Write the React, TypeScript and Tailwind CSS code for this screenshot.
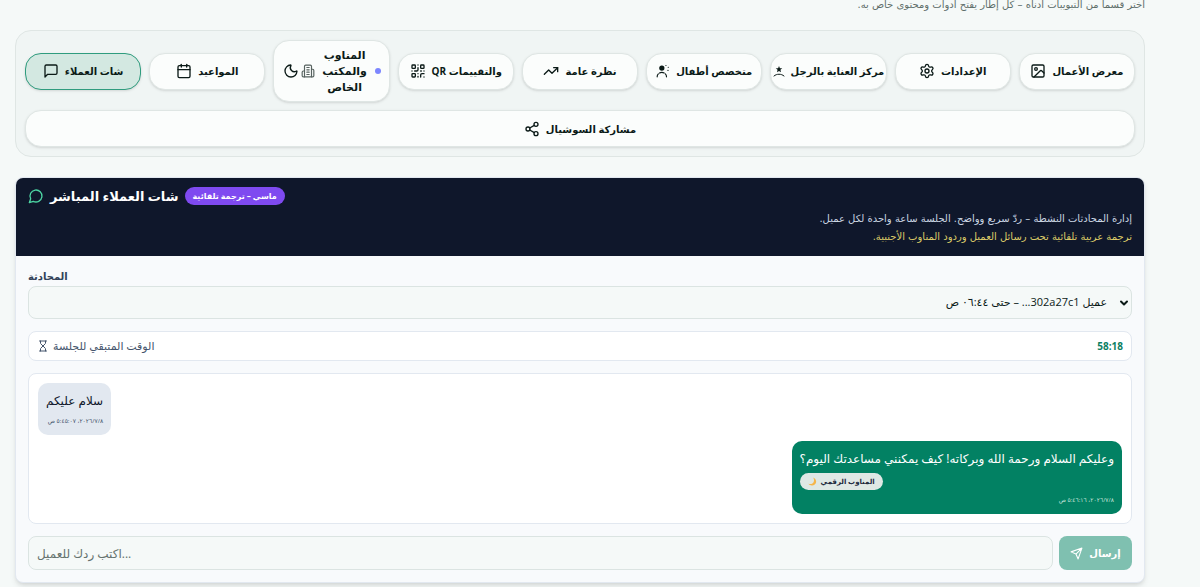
import React, { useState } from 'react';
import { Calendar, ChevronDown, Hourglass, Image, Moon, QrCode, Settings, Share2, TrendingUp } from 'lucide-react';

const MessageIcon: React.FC = () => (
  <svg width="16" height="16" viewBox="0 0 24 24" fill="none" stroke="currentColor" strokeWidth="2" strokeLinecap="round" strokeLinejoin="round" className="shrink-0" aria-hidden="true">
    <path d="M21 15a2 2 0 0 1-2 2H7l-4 4V5a2 2 0 0 1 2-2h14a2 2 0 0 1 2 2z" />
  </svg>
);

const OfficeIcon: React.FC = () => (
  <svg width="14" height="14" viewBox="0 0 24 24" fill="none" stroke="currentColor" strokeWidth="2" strokeLinecap="round" strokeLinejoin="round" className="-ml-1 shrink-0 text-[#56625f]" aria-hidden="true">
    <path d="M6 22V4a2 2 0 0 1 2-2h8a2 2 0 0 1 2 2v18Z" />
    <path d="M6 12H4a2 2 0 0 0-2 2v6a2 2 0 0 0 2 2h2M18 9h2a2 2 0 0 1 2 2v9a2 2 0 0 1-2 2h-2" />
    <path d="M10 6h4M10 10h4M10 14h4M10 18h4" />
  </svg>
);

const KidsIcon: React.FC = () => (
  <svg width="14" height="14" viewBox="0 0 24 24" fill="none" stroke="currentColor" strokeWidth="2" strokeLinecap="round" className="shrink-0" aria-hidden="true">
    <circle cx="10" cy="7" r="4.500" fill="currentColor" stroke="none" />
    <path d="M2 22c0-2 1-4 2-5M18 22c0-2-1-4-2-5M6 15.500c2.500-1.500 5.500-1.500 8 0" />
    <path d="M17 2.500h.1M21 5.500h.1M20.500 11h.1" />
  </svg>
);

const StarIcon: React.FC = () => (
  <svg width="12" height="12" viewBox="0 0 24 24" fill="none" stroke="currentColor" strokeWidth="2" strokeLinecap="round" className="shrink-0" aria-hidden="true">
    <path d="M12 2l1.800 4.300 4.700.4-3.600 3 1.100 4.600-4-2.500-4 2.500 1.100-4.600-3.600-3 4.700-.4z" fill="currentColor" stroke="none" />
    <path d="M2 22c3-2.500 6-3.500 10-3.500s7 1 10 3.500" />
  </svg>
);

const ChatIcon: React.FC = () => (
  <svg width="16" height="16" viewBox="0 0 24 24" fill="none" stroke="currentColor" strokeWidth="2" strokeLinecap="round" strokeLinejoin="round" className="shrink-0 text-[#4cd3a2]" aria-hidden="true">
    <path d="M7.900 20A9 9 0 1 0 4 16.100L2 22Z" />
  </svg>
);

const SendIcon: React.FC = () => (
  <svg width="13" height="13" viewBox="0 0 24 24" fill="none" stroke="currentColor" strokeWidth="2" strokeLinecap="round" strokeLinejoin="round" className="shrink-0" aria-hidden="true">
    <path d="M22 2L11 13M22 2l-7 20-4-9-9-4z" />
  </svg>
);

const Crescent: React.FC = () => (
  <svg width="9" height="9" viewBox="0 0 24 24" className="shrink-0" aria-hidden="true">
    <path d="M14 1c9 4 10 14 4 19-5 4-13 3-17-2 7 2 12 0 14-5 2-4 1-8-1-12z" fill="#f5b54a" />
  </svg>
);

const TAB =
  'flex min-h-[37px] min-w-0 items-center justify-center gap-1.5 rounded-2xl border py-1.5 leading-4 font-bold shadow-sm';

const tabs = [
  { label: 'شات العملاء', icon: <MessageIcon />, active: true },
  { label: 'المواعيد', icon: <Calendar size={16} className="shrink-0" /> },
  {
    label: 'المناوب والمكتب الخاص',
    icon: (
      <>
        <Moon size={16} className="shrink-0" />
        <OfficeIcon />
      </>
    ),
    dot: true,
  },
  { label: 'والتقييمات QR', icon: <QrCode size={16} className="shrink-0" /> },
  { label: 'نظرة عامة', icon: <TrendingUp size={16} className="shrink-0" /> },
  { label: 'متخصص أطفال', icon: <KidsIcon /> },
  { label: 'مركز العناية بالرجل', icon: <StarIcon /> },
  { label: 'الإعدادات', icon: <Settings size={16} className="shrink-0" /> },
  { label: 'معرض الأعمال', icon: <Image size={16} className="shrink-0" /> },
];

const App: React.FC = () => {
  const [reply, setReply] = useState('');

  return (
    <div className="min-h-screen overflow-hidden bg-[#f5f9f8] pr-[55px] pl-[15px] font-['Open_Sans','DejaVu_Sans',sans-serif] text-[#0b1a17]">
      <p dir="rtl" className="-mt-1 font-['DejaVu_Sans',sans-serif] text-[10px] leading-[18px] text-[#5f6f6b]">
        اختر قسماً من التبويبات أدناه – كل إطار يفتح أدوات ومحتوى خاص به.
      </p>

      {/* Tabs */}
      <nav className="mt-4 rounded-2xl border border-[#dfe6e4] bg-[#f0f5f4] p-[9px]">
        <div className="grid grid-cols-9 items-center gap-2">
          {tabs.map((tab) => (
            <button
              key={tab.label}
              type="button"
              className={`${TAB} ${tab.active ? 'border-[#2f9c7e] bg-[#d3e8e1]' : 'border-[#dfe6e4] bg-[#fbfdfc]'} ${tab.dot ? 'px-2 text-[11px]' : 'text-[10px]'}`}
            >
              {tab.icon}
              <span dir="rtl" className={tab.dot ? 'w-12' : 'whitespace-nowrap'}>{tab.label}</span>
              {tab.dot && <span className="size-1.5 shrink-0 rounded-full bg-indigo-400" />}
            </button>
          ))}
        </div>
        <button type="button" className={`${TAB} mt-2 w-full border-[#dfe6e4] bg-[#fbfdfc] text-[10px]`}>
          <Share2 size={16} />
          <span dir="rtl">مشاركة السوشيال</span>
        </button>
      </nav>

      {/* Live chat */}
      <section className="mt-5 overflow-hidden rounded-lg border border-slate-200 bg-slate-50 shadow-md">
        <header className="bg-slate-900 px-3 pt-1.5 pb-2.5">
          <div className="flex items-center gap-1.5">
            <ChatIcon />
            <h2 dir="rtl" className="text-[13px] leading-6 font-bold text-white">شات العملاء المباشر</h2>
            <span dir="rtl" className="rounded-full bg-[#7f4af0] px-2 text-[8px] leading-[18px] font-bold text-white">
              ماسي – ترجمة تلقائية
            </span>
          </div>
          <div dir="rtl" className="mt-0.5 font-['DejaVu_Sans',sans-serif] text-[10px] leading-[18px]">
            <p className="text-slate-300">إدارة المحادثات النشطة – ردّ سريع وواضح. الجلسة ساعة واحدة لكل عميل.</p>
            <p className="text-[#dccb68]">ترجمة عربية تلقائية تحت رسائل العميل وردود المناوب الأجنبية.</p>
          </div>
        </header>

        <div className="p-3">
          <label htmlFor="chat" className="block text-[10px] leading-4 font-bold text-slate-700">المحادثة</label>
          <div className="relative mt-0.5">
            <select
              id="chat"
              dir="rtl"
              className="block h-[33px] w-full appearance-none rounded-lg border border-[#dbe4e2] bg-[#f5f9f8] pr-6 pl-2 text-[11px]"
            >
              <option>عميل 302a27c1... – حتى ٠٦:٤٤ ص</option>
            </select>
            <ChevronDown size={12} strokeWidth={4} className="pointer-events-none absolute top-1/2 right-0.5 -translate-y-1/2" />
          </div>

          <div className="mt-3 flex h-[30px] items-center gap-1 rounded-lg border border-slate-200 bg-white px-2 text-slate-600">
            <Hourglass size={12} />
            <span dir="rtl" className="text-[11px]">الوقت المتبقي للجلسة</span>
            <span className="ml-auto text-[10px] font-bold text-[#0b8062]">58:18</span>
          </div>

          {/* Messages */}
          <div className="mt-3 flex min-h-[150px] flex-col gap-1.5 rounded-lg border border-slate-200 bg-white p-[9px]">
            <div dir="rtl" className="self-start rounded-[10px] bg-slate-200 p-2">
              <p className="text-xs leading-5 text-slate-900">سلام عليكم</p>
              <time className="block pt-1 text-[6px] leading-3 text-slate-600">{'٨\u200f/٧\u200f/٢٠٢٦، ٥:٤٥:٠٧ ص'}</time>
            </div>
            <div dir="rtl" className="self-end rounded-[10px] bg-[#028163] p-2 text-white">
              <p className="text-xs leading-5">وعليكم السلام ورحمة الله وبركاته! كيف يمكنني مساعدتك اليوم؟</p>
              <div dir="ltr" className="mt-1 mr-auto flex w-fit items-center gap-1 rounded-full bg-[#dfe8e5] px-2 text-[7px] leading-[17px] font-bold text-slate-800">
                <Crescent />
                <span dir="rtl">المناوب الرقمي</span>
              </div>
              <time className="block pt-1 text-[6px] leading-3 text-[#c4e2d9]">{'٨\u200f/٧\u200f/٢٠٢٦، ٥:٤٦:١٦ ص'}</time>
            </div>
          </div>

          <form className="mt-3 flex gap-1.5" onSubmit={(e) => e.preventDefault()}>
            <input
              value={reply}
              onChange={(e) => setReply(e.target.value)}
              aria-label="اكتب ردك للعميل"
              placeholder="اكتب ردك للعميل..."
              className="h-[34px] min-w-0 flex-1 rounded-lg border border-[#dbe4e2] bg-[#f5f9f8] px-2 text-xs placeholder:text-[#66736f]"
            />
            <button disabled={!reply} className="flex w-[73px] items-center justify-center gap-1.5 rounded-lg bg-[#7fc0b0] text-[10px] font-bold text-white">
              <SendIcon />
              إرسال
            </button>
          </form>
        </div>
      </section>
    </div>
  );
};

export default App;
